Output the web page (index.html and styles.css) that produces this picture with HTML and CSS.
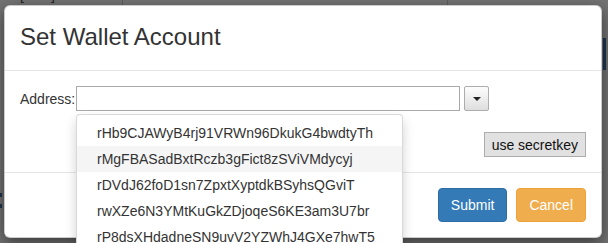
FILE: index.html
```html
<!DOCTYPE html>
<html>
<head>
<meta charset="utf-8">
<link rel="stylesheet" href="styles.css">
</head>
<body>
<div class="page">
  <div class="deco deco-brackets">[&nbsp;&nbsp;&nbsp;&nbsp;&nbsp;&nbsp;&nbsp;]</div>
  <div class="deco deco-line1"></div>
  <div class="deco deco-line2"></div>
  <div class="deco deco-blue"></div>
  <div class="deco deco-mark1"></div>
  <div class="deco deco-mark2"></div>
  <div class="modal">
    <div class="modal-header">
      <h4 class="modal-title">Set Wallet Account</h4>
    </div>
    <div class="modal-body">
      <div class="addr-row">
        <label class="addr-label">Address:</label>
        <div class="combo">
          <input class="addr-input" type="text">
          <ul class="dropdown-menu">
            <li><a>rHb9CJAWyB4rj91VRWn96DkukG4bwdtyTh</a></li>
            <li class="active"><a>rMgFBASadBxtRczb3gFict8zSViVMdycyj</a></li>
            <li><a>rDVdJ62foD1sn7ZpxtXyptdkBSyhsQGviT</a></li>
            <li><a>rwXZe6N3YMtKuGkZDjoqeS6KE3am3U7br</a></li>
            <li><a>rP8dsXHdadneSN9uvV2YZWhJ4GXe7hwT5</a></li>
          </ul>
        </div>
        <button class="caret-btn"><span class="caret"></span></button>
      </div>
      <div class="key-row">
        <button class="key-btn">use secretkey</button>
      </div>
    </div>
    <div class="modal-footer">
      <button class="btn btn-primary">Submit</button>
      <button class="btn btn-warning">Cancel</button>
    </div>
  </div>
</div>
</body>
</html>
```

FILE: styles.css
```css
html, body {
  margin: 0;
  padding: 0;
  overflow: hidden;
  background: #737373;
}
body {
  width: 608px;
  height: 243px;
  font-family: "Liberation Sans", Arial, Helvetica, sans-serif;
  font-size: 14px;
  color: #333;
}
.page {
  position: relative;
  width: 608px;
  height: 243px;
  padding: 5px 0 0 4px;
  box-sizing: border-box;
}
.deco {
  position: absolute;
}
.deco-brackets {
  left: 20px;
  top: -13px;
  font-size: 14px;
  color: #222;
  line-height: 16px;
}
.deco-line1, .deco-line2 {
  top: 0;
  width: 1px;
  height: 5px;
  background: #5e5e5e;
}
.deco-line1 { left: 122px; }
.deco-line2 { left: 447px; }
.deco-blue {
  left: 603px;
  top: 38px;
  width: 3px;
  height: 32px;
  background: #1d3550;
}
.deco-mark1, .deco-mark2 {
  left: 0;
  width: 2px;
  height: 4px;
  background: #1d3550;
}
.deco-mark1 { top: 193px; }
.deco-mark2 { top: 204px; }

.modal {
  position: relative;
  width: 598px;
  background: #fff;
  border: 1px solid rgba(0,0,0,.2);
  border-radius: 6px;
  box-sizing: border-box;
  box-shadow: 0 5px 15px rgba(0,0,0,.5);
}
.modal-header {
  padding: 14px 15px 16px;
  border-bottom: 1px solid #e5e5e5;
}
.modal-title {
  margin: 0;
  font-size: 24px;
  font-weight: normal;
  line-height: 34px;
  color: #333;
}
.modal-body {
  padding: 15px;
  display: flex;
  flex-direction: column;
}
.addr-row {
  display: flex;
  align-items: center;
}
.addr-label {
  width: 56px;
  color: #333;
}
.combo {
  position: relative;
}
.addr-input {
  display: block;
  width: 384px;
  height: 25px;
  box-sizing: border-box;
  border: 1px solid #a9a9a9;
  margin: 0;
  padding: 1px 2px;
  font: inherit;
}
.dropdown-menu {
  position: absolute;
  left: 0;
  top: 100%;
  margin: 3px 0 0;
  padding: 5px 0;
  list-style: none;
  width: 327px;
  box-sizing: border-box;
  background: #fff;
  border: 1px solid rgba(0,0,0,.15);
  border-radius: 4px;
  box-shadow: 0 6px 12px rgba(0,0,0,.175);
  z-index: 10;
}
.dropdown-menu li a {
  display: block;
  padding: 3px 20px;
  line-height: 20px;
  color: #333;
  white-space: nowrap;
}
.dropdown-menu li.active a {
  background: #f5f5f5;
}
.caret-btn {
  margin: 0 0 0 4px;
  width: 25px;
  height: 25px;
  box-sizing: border-box;
  border: 1px solid #adadad;
  border-radius: 2px;
  background: linear-gradient(#fdfdfd, #dedede);
  padding: 0;
  display: flex;
  align-items: center;
  justify-content: center;
}
.caret {
  display: block;
  width: 0;
  height: 0;
  border-top: 4px solid #222;
  border-left: 4px solid transparent;
  border-right: 4px solid transparent;
  margin-top: 1px;
}
.key-row {
  display: flex;
  justify-content: flex-end;
  margin-top: 21px;
}
.key-btn {
  height: 25px;
  box-sizing: border-box;
  margin: 0;
  padding: 0 7px;
  border: 1px solid #adadad;
  border-radius: 0;
  background: #e1e1e1;
  font: 14px "Liberation Sans", Arial, sans-serif;
  color: #111;
}
.modal-footer {
  border-top: 1px solid #e5e5e5;
  padding: 15px;
  display: flex;
  justify-content: flex-end;
  gap: 9px;
}
.btn {
  height: 34px;
  box-sizing: border-box;
  padding: 6px 12px;
  margin: 0;
  font: 14px/20px "Liberation Sans", Arial, sans-serif;
  color: #fff;
  border: 1px solid transparent;
  border-radius: 4px;
}
.btn-primary {
  background: #337ab7;
  border-color: #2e6da4;
}
.btn-warning {
  background: #f0ad4e;
  border-color: #eea236;
}
```
